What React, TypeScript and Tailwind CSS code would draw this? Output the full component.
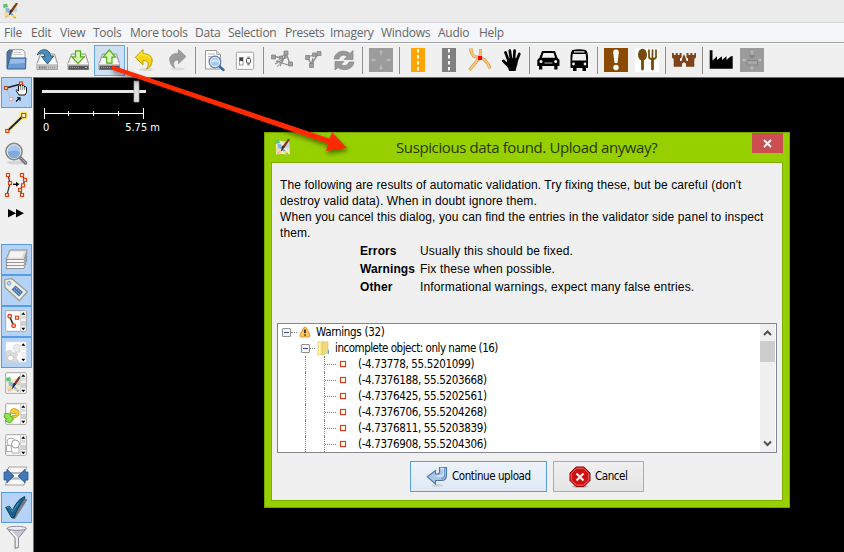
import React from "react";

type Kids = { children?: React.ReactNode };

const tahoma = "font-['DejaVu_Sans_Condensed','DejaVu_Sans',sans-serif]";

function Tool({ children, active }: Kids & { active?: boolean }) {
  return (
    <div className={`relative h-[31px] w-[31px] shrink-0 ${active ? "bg-[#cfe0f5] outline outline-1 -outline-offset-1 outline-[#66a7e8]" : ""}`}>
      <svg viewBox="0 0 31 31" className="block h-[31px] w-[31px]">{children}</svg>
    </div>
  );
}

function Side({ children, active }: Kids & { active?: boolean }) {
  return (
    <div className={`h-[31px] w-[31px] shrink-0 ${active ? "bg-[#b5d3f6] outline outline-1 -outline-offset-1 outline-[#569de5]" : ""}`}>
      <svg viewBox="0 0 31 31" className="block h-[31px] w-[31px]">{children}</svg>
    </div>
  );
}

function Sep() {
  return <div className="ml-[2px] mr-[3px] mt-[2px] h-[27px] w-px shrink-0 bg-[#8e8e8e]" />;
}

function Disk() {
  return (
    <g>
      <path d="M8.5 9h14l3 9.5v6H5v-6z" fill="#e9e9e8" stroke="#8d8d8b" strokeWidth=".9" />
      <path d="M9.5 10.5h12l2 7H7.5z" fill="#fbfbfb" />
      <path d="M5.3 19h20v5.3h-20z" fill="#bfc0be" />
      <path d="M5.3 18.7h20" stroke="#fff" />
      <path d="M7 22.5h8" stroke="#777" strokeWidth="2" strokeDasharray="1 .6" />
      <path d="M16 22.5h8" stroke="#999" strokeWidth="1.5" strokeDasharray="1 1" />
    </g>
  );
}

function DarkDisk() {
  return (
    <g>
      <Disk />
      <path d="M5.5 20.7h20v4h-20z" fill="#55585a" />
      <path d="M7 22.5h9" stroke="#9a9a9a" strokeDasharray="1 1" />
      <path d="M22 22.5h2" stroke="#9ad36a" />
    </g>
  );
}

function Logo() {
  return (
    <g>
      <path d="M1 1.5h4l3 1 6-.5 1 13-4 .5-5-.7-5 .7z" fill="#f3ecc4" />
      <path d="M9 2.5l4.5 1 .5 5-3 1z" fill="#b9d3f4" />
      <path d="M0 1.5l4-1 1 3.500-4.500 1z" fill="#5cc46c" />
      <path d="M2.500 4.500l4 1 .5 4-4 2z" fill="#8ab6ea" />
      <path d="M1 10l4-1 2 5-5 1.500z" fill="#f6d99a" />
      <path d="M5.500 8l7 7" stroke="#78a8e6" strokeWidth="1.800" />
      <path d="M2 14.500l6-4" stroke="#dc8cc4" strokeWidth=".6" />
      <path d="M9 13h3" stroke="#f2d96a" strokeWidth="2" />
      <path d="M13.500.8L8.500 8" stroke="#8d3410" strokeWidth="2.200" strokeLinecap="round" />
      <path d="M9.500 7.500l-3 4.500 1-5z" fill="#38281e" stroke="#38281e" strokeWidth=".6" />
    </g>
  );
}

function Node({ x, y, s = 3, c = "#e2420f" }: { x: number; y: number; s?: number; c?: string }) {
  return <rect x={x - s / 2} y={y - s / 2} width={s} height={s} fill="#fff" stroke={c} strokeWidth="1.2" />;
}

function Panel({ children }: Kids) {
  return (
    <g>
      <rect x="4.7" y="4.700" width="20.600" height="20.600" rx="1" fill="#fff" stroke="#a6a6a6" />
      {children}
      <rect x="19.500" y="5.300" width="5.300" height="19.400" fill="#f7f7f7" />
      <path d="M19.500 5v20" stroke="#c9c9c9" strokeWidth=".7" />
      <rect x="20" y="15" width="5" height="5" fill="#d0d0d0" />
      <path d="M20.500 10.500h4M20.500 12.500h4M21.500 11.500h4" stroke="#bdbdbd" strokeDasharray="1 1" />
      <path d="M22.300 6.200l2 2.600h-4zM22.300 24.300l2-2.600h-4z" fill="#000" />
    </g>
  );
}

function FourArrows() {
  return (
    <g>
      <rect x="3" y="3" width="24" height="24" fill="#9b9b9b" />
      <path d="M3 12l8-9M9 27L27 10M18 27l9-7" stroke="#a1a1a1" />
      <path d="M15 6v4M15 20v4M6 15h4M20 15h4" stroke="#bdbdbd" />
      <path d="M13 7.500L15 5l2 2.500zM13 22.500l2 2.500 2-2.500zM7.500 13L5 15l2.500 2zM22.500 13l2.500 2-2.500 2z" fill="#bdbdbd" />
    </g>
  );
}

function Toolbar() {
  return (
    <div className="flex h-[34px] items-start bg-[#f0f0f0] pl-px pt-px">
      <Tool>
        <path d="M6 7l2-2h4l1 2v16H6z" fill="#52749c" stroke="#456387" />
        <path d="M10 11l2-6.500h9.500L24 7v7H10z" fill="#f5f5f5" stroke="#8d8d8d" strokeWidth=".8" />
        <path d="M13 7.500h7M12.500 9.500h9" stroke="#bcbcbc" strokeWidth=".8" />
        <path d="M8.500 13h16.500L24.500 24H6z" fill="#6d9cd2" stroke="#31609a" />
        <path d="M9.500 14h14.500l-.5 4-15 1z" fill="#9abce3" />
      </Tool>
      <Tool>
        <Disk />
        <path d="M5.500 10C6 4 17 1.500 18.700 11h3L15.500 19 9.500 11.500h3.300C12.500 7.500 9 7 5.500 10z" fill="#4e8db9" stroke="#295f85" />
      </Tool>
      <Tool>
        <DarkDisk />
        <path d="M12.500 5.800h5v6h3.700L15 18.300 8.800 11.800h3.700z" fill="#dcf8b4" stroke="#4caf19" strokeWidth="1.200" />
      </Tool>
      <Tool active>
        <DarkDisk />
        <path d="M12.700 18.200h5.300v-6h3.500L15.300 5 9 12.200h3.700z" fill="#dcf8b4" stroke="#4caf19" strokeWidth="1.200" />
      </Tool>
      <Sep />
      <Tool>
        <ellipse cx="15" cy="24.500" rx="7" ry="1.500" fill="#d7d7d7" />
        <path d="M4.300 12.300L12 4.600v4c7 0 10 4 9 8.500-.5 4-3 6-5.500 6.800 2-2.500 3.500-8.400-3.500-8.400v4.300z" fill="#f5d60f" stroke="#b99500" strokeWidth=".9" />
        <path d="M6 12.300L11 7.300v2.500c4 0 7 1 8 4" fill="none" stroke="#fdf08a" strokeWidth=".8" />
      </Tool>
      <Tool>
        <ellipse cx="16" cy="24" rx="7" ry="1.500" fill="#dcdcdc" />
        <path d="M24 11.500L16.500 4.500v3.700c-7 0-10 4-8.500 8.500.7 3 2.500 5.300 5 6.300-2-3-2.500-8 3.500-8v3.800z" fill="#9c9c9c" stroke="#8c8c8c" strokeWidth=".7" />
      </Tool>
      <Sep />
      <Tool>
        <path d="M6.500 5.500h11l4 4V24h-15z" fill="#fcfcfc" stroke="#9b9b9b" />
        <path d="M17.500 5.500v4h4" fill="#ddd" stroke="#9b9b9b" strokeWidth=".7" />
        <path d="M9 9h7M9 11.500h9M9 14h3M9 16.500h1" stroke="#b8b8b8" />
        <path d="M20 21l4.500 4" stroke="#3c67a4" strokeWidth="2.500" strokeLinecap="round" />
        <circle cx="16" cy="17" r="5.800" fill="#a6c8ee" stroke="#6182ae" strokeWidth="1.200" />
        <circle cx="16" cy="17" r="4.600" fill="none" stroke="#e1eefb" />
        <path d="M12.500 17q3.500-3 7 0" fill="none" stroke="#d8e9fc" strokeWidth="2" />
      </Tool>
      <Tool>
        <rect x="6.300" y="7.200" width="17.400" height="17.200" rx="1" fill="#fafafa" stroke="#a5a5a5" />
        <rect x="9.500" y="12.500" width="3.500" height="7.500" fill="#fff" stroke="#999" />
        <path d="M9.500 12.500h3.500v3.500h-3.500z" fill="#444" />
        <path d="M18.500 11.500v9" stroke="#999" strokeWidth="2.500" />
        <rect x="16.500" y="13.500" width="4" height="4.500" rx="1" fill="#fff" stroke="#555" />
      </Tool>
      <Sep />
      <Tool>
        <g fill="none" stroke="#8c8c8c" strokeWidth="1.300">
          <path d="M6 11l8 2 5-5 4 11M8 19l12-7M13 21l6-12M9 16l12 4" />
          <path d="M14 13l-5 4M20 10l-10 12" strokeWidth=".8" />
        </g>
        <path d="M4.500 10h4v4h-4zM17 6h4v4h-4zM12.500 11h3v3h-3zM21.500 17h4v4h-4z" fill="#a0a0a0" stroke="#7e7e7e" strokeWidth=".7" />
      </Tool>
      <Tool>
        <path d="M9 12l7-2 5-2-5 7-2 5-5-8M15 13l-2 8" fill="none" stroke="#8c8c8c" strokeWidth="1.300" />
        <path d="M7.500 10.500h4v4h-4zM19 6.500h4v4h-4zM14.500 8h3.500v3.500h-3.500zM11.500 18.500h4v4h-4z" fill="#a0a0a0" stroke="#7e7e7e" strokeWidth=".7" />
      </Tool>
      <Tool>
        <path d="M5 14C6 6 16 4 21 8.500l3-3v9h-9l3-3c-3-2.500-7-1.500-8 2.500zM25 17c-1 8-11 9.500-16 5.500l-3 2.500v-8.500h9l-3 3c3 2 7 1 8-2.500z" fill="#999" stroke="#858585" strokeWidth=".7" />
      </Tool>
      <Sep />
      <Tool><FourArrows /></Tool>
      <Sep />
      <Tool>
        <rect x="8" y="3" width="14" height="24" fill="#ffa500" />
        <path d="M15 4v23" stroke="#fff" strokeWidth="2" strokeDasharray="3.400 2.600" />
      </Tool>
      <Tool>
        <rect x="8" y="3" width="14" height="24" fill="#808080" />
        <path d="M15 4v23" stroke="#fff" strokeWidth="2" strokeDasharray="3.400 2.600" />
      </Tool>
      <Tool>
        <path d="M4 5h2.500q0 5 3 6.500l5.500 1M15.500 4v4l-.5 4.500q7 2 10 11M15 12.500L4.500 25" fill="none" stroke="#d9a04f" strokeWidth="3" />
        <path d="M4.500 5h2q0 5 3 6.500l5.500 1M15.500 4.500v4l-.5 4q7 2 9.500 10.500M15 12.500L5 24.500" fill="none" stroke="#fbc577" strokeWidth="1.800" />
        <rect x="13" y="11" width="4" height="4" fill="red" />
      </Tool>
      <Tool>
        <g stroke="#000" fill="none" strokeLinecap="round">
          <path d="M12.300 15L9.500 7.500M15 14L13.800 5.500M18 14l.6-8.300M20.500 16l2.800-7" strokeWidth="2.700" />
          <path d="M13 21.500L7.500 16" strokeWidth="3" />
        </g>
        <path d="M11 13.500l10.700-.5q.6 5-1.200 9l-1 4h-6.500l-1-3.500-3-4 2-1z" fill="#000" />
      </Tool>
      <Sep />
      <Tool>
        <path d="M9 6h13l2.300 6.500L26.500 15v6H24.500v3.500h-3.200V21h-12v3.500H6V21H4.300v-6l2.200-2.500z" fill="#000" />
        <path d="M10.500 8h10l1.700 4.800H8.800z" fill="#f0f0f0" />
        <circle cx="8" cy="16.500" r="1.500" fill="#f0f0f0" /><circle cx="22.700" cy="16.500" r="1.500" fill="#f0f0f0" />
        <path d="M11.500 18h8" stroke="#f0f0f0" strokeWidth=".8" />
      </Tool>
      <Tool>
        <path d="M8.500 5q6.500-1.600 13 0 2 1 2.500 6v12h-2v3h-3.500v-3h-6v3H9v-3H6.500V11Q7 6 8.500 5z" fill="#000" />
        <path d="M10 6.300h10.500v1.200H10zM8.700 9h13l.6 6.500H8.200z" fill="#f0f0f0" />
        <circle cx="9.500" cy="19" r="1.400" fill="#f0f0f0" /><circle cx="21" cy="19" r="1.400" fill="#f0f0f0" />
      </Tool>
      <Sep />
      <Tool>
        <rect x="3" y="3" width="24" height="24" fill="#8b4a00" />
        <path d="M15 4.500q3.500 0 2.700 4L16.500 18h-3l-1.200-9.500q-.8-4 2.700-4z" fill="#fff" />
        <circle cx="15" cy="22.500" r="2.700" fill="#fff" />
      </Tool>
      <Tool>
        <rect x="3" y="3" width="24" height="24" fill="#fff" />
        <ellipse cx="10.500" cy="9.700" rx="4.500" ry="6" fill="#734a08" />
        <path d="M10.500 14v10" stroke="#734a08" strokeWidth="2.800" strokeLinecap="round" />
        <path d="M17 5v7q0 2 3.500 2t3.500-2V5M20.500 5v8" fill="none" stroke="#734a08" strokeWidth="1.700" strokeLinecap="round" />
        <path d="M20.500 14v10" stroke="#734a08" strokeWidth="2.800" strokeLinecap="round" />
      </Tool>
      <Sep />
      <Tool>
        <path d="M3 8h1.800v2h1.900V8h2v2h1.900V8h2v4.500L11 13.500v2.500h1.500l1.500-5 1-1.500 1 1.500 1.500 5H19v-2.500l-1.500-1V8h2v2h1.900V8h2v2h1.900V8H27v4.500l-1.700 1.500v7.700h-8.300v-3q-2-3-4 0v3H4.700V14L3 12.500z" fill="#7d431a" />
      </Tool>
      <Sep />
      <Tool>
        <path d="M3.700 5.300h2.800v10.200l4.500-4.300V15l5-3.800V15l4.500-3.800V15l4-3.500 2.200-.5v12.700h-23z" fill="#000" />
      </Tool>
      <Tool>
        <FourArrows />
        <path d="M10 15.500h10.500v4.500H10z" fill="#a8a8a8" stroke="#858585" />
        <path d="M11.500 10h7l-3.500 4z" fill="#858585" />
      </Tool>
    </div>
  );
}

function Sidebar() {
  return (
    <div className="flex w-[33px] shrink-0 flex-col bg-[#f0f0f0] pl-px">
      <Side active>
        <path d="M5 11l15-4" stroke="#222" strokeWidth="1.600" />
        <path d="M6 13l4 9" stroke="#c3b9c3" strokeWidth="1.200" />
        <Node x={5} y={11} /><Node x={20} y={6.500} /><Node x={10} y={22} c="#deb0b0" />
        <path d="M17.500 14V9q1-2 2 0V8q1.200-1.500 2 0v1q1.300-1.300 2 0v1q1.500-1 2 .5v5l-1.500 2.500h-6l-3-4.500q.5-1.700 2.500.5z" fill="#fff" stroke="#000" strokeWidth=".9" />
        <path d="M19.700 9v4M21.800 9v4M23.700 10v3" stroke="#000" strokeWidth=".5" />
        <path d="M15 24.500l3.500-3.300M16 20.700h3v3" fill="none" stroke="#000" strokeWidth="1.100" />
      </Side>
      <Side>
        <path d="M6.500 23L22.500 7.500" stroke="#f6f08a" strokeWidth="5" />
        <rect x="18.700" y="3.700" width="7.600" height="7.600" fill="#f8ef6d" />
        <path d="M6.500 23L22.500 7.500" stroke="#16165c" strokeWidth="1.800" />
        <Node x={6.300} y={23} /><Node x={22.700} y={7.500} s={4} />
      </Side>
      <Side>
        <ellipse cx="15" cy="23.500" rx="9" ry="2" fill="#d6d6d6" />
        <path d="M19 18.500l5.500 5.500" stroke="#777" strokeWidth="3.500" strokeLinecap="round" />
        <path d="M20 19l4.500 4.500" stroke="#ccc" strokeDasharray="1.500 1" />
        <circle cx="13" cy="12.500" r="8" fill="#a8c7ea" stroke="#888" strokeWidth="1.800" />
        <circle cx="13" cy="12.500" r="6.800" fill="none" stroke="#e6eff9" />
        <path d="M6.800 13q6-3 12.400 0a6.200 6.200 0 0 1-12.400 0z" fill="#7eaadc" />
      </Side>
      <Side>
        <path d="M7 5l2 8-3 12M21 5l3 5-2 5-3 5 2 5" fill="none" stroke="#333" strokeWidth="1.200" />
        <path d="M12 14.300h3.500" stroke="#000" strokeWidth="1.300" /><path d="M15 11.800l3.300 2.500-3.300 2.500z" />
        <Node x={7} y={5} /><Node x={9} y={13} /><Node x={6} y={25} />
        <Node x={21} y={5} /><Node x={24} y={10} /><Node x={22} y={15.300} /><Node x={19} y={20} /><Node x={21} y={25} />
      </Side>
      <svg viewBox="0 0 31 24" className="block h-[24px] w-[31px] shrink-0">
        <path d="M7 8l8 4.200-8 4.300zM15 8l8 4.200-8 4.300z" fill="#000" />
      </svg>
      <div className="h-[19px] shrink-0" />
      <Side active>
        {[9, 6, 3].map((d) => (
          <path key={d} d={`M8.500 ${6 + d}h17.500l-3 9.500H5z`} fill="#f6f6f6" stroke="#8b8b8b" strokeWidth=".9" />
        ))}
        <path d="M9 6h17.300l-3.300 9.500H5z" fill="#dfdfdf" stroke="#8b8b8b" strokeWidth=".9" />
        <path d="M10 7.500h13l-2.500 6H7.500z" fill="#f4f4f4" />
      </Side>
      <Side active>
        <path d="M3.700 4.500L11 3.700l15.300 13-8 9L4 12.500z" fill="#eeeeea" stroke="#999989" strokeWidth="1.200" />
        <circle cx="8" cy="8.300" r="1.900" fill="#b5d3f6" stroke="#8aa1bd" />
        <path d="M14.500 10.500l7.500 6.500-4 4.500-7.500-7z" fill="#4878b4" />
        <path d="M14.500 12.500l5.500 5M13 14.500l5.500 5" stroke="#a9c3e4" strokeWidth=".9" strokeDasharray="2 .8" />
      </Side>
      <Side active>
        <Panel>
          <path d="M8.700 10.500L12.700 20" stroke="#222" strokeWidth="1.500" />
          <circle cx="8.700" cy="10.300" r="1.800" fill="#fff" stroke="#e83c1c" strokeWidth="1.300" />
          <circle cx="12.700" cy="19.700" r="1.800" fill="#fff" stroke="#e83c1c" strokeWidth="1.300" />
          <Node x={16} y={11.700} />
        </Panel>
      </Side>
      <Side active>
        <rect x="4.700" y="4.700" width="20.600" height="20.600" rx="1" fill="#fff" stroke="#cbd6e2" strokeWidth=".8" />
        <path d="M13 8.500l3-1.500 3 1.500v6.500h-4l-3-3z" fill="#ececec" stroke="#d2d2d2" strokeWidth=".8" />
        <path d="M5 15l2-1.500h3l1 1.500 2.500 1 2-.5 1 2.500-1.300 2 .3 2.500 2 1v1.500H5z" fill="#dadada" stroke="#c4c4c4" strokeWidth=".6" />
        <circle cx="9.500" cy="21" r="2.800" fill="#fff" stroke="#bbb" strokeWidth=".7" />
        <rect x="20.500" y="15" width="4.500" height="5" fill="#efefef" />
        <path d="M20.500 10.500h4M20.500 12.500h4" stroke="#dedede" strokeDasharray="1 1" />
        <path d="M22.300 6.200l2 2.600h-4zM22.300 24.300l2-2.600h-4z" fill="#000" />
      </Side>
      <Side>
        <Panel>
          <g transform="translate(5 8.500)"><Logo /></g>
        </Panel>
      </Side>
      <Side>
        <Panel>
          <path d="M9 14q1-6 6-4l3 2v4l-4 3-5 .5 2-3h4v-2h-3z" fill="#f3cf3c" stroke="#c79c10" strokeWidth=".8" />
        </Panel>
        <path d="M4 14l6 1-1 2 3 1v3l-3 3-5-2 2-2-3-2z" fill="#8fe052" stroke="#4aa31c" strokeWidth=".8" />
      </Side>
      <Side>
        <Panel>
          <circle cx="10" cy="12" r="4" fill="#fff" stroke="#aaa" />
          <path d="M5.500 15.500h6v6h-6z" fill="#fff" stroke="#aaa" />
          <path d="M10 16q4-2 8 1v6h-7z" fill="#fff" stroke="#aaa" />
          <circle cx="14.500" cy="14" r="4" fill="#fff" stroke="#999" />
        </Panel>
      </Side>
      <Side>
        <path d="M8 6h18l-3 6H5zM8 12h18l-3 6H5zM8 17h18l-3 7H4z" fill="#f9f9f9" stroke="#999" strokeWidth=".9" />
        <path d="M3 11h3V8.200l7 6.800-7 6.800V19H3z" fill="#4377b8" stroke="#2a5896" strokeWidth=".8" />
        <path d="M27 11h-3V8.200L17 15l7 6.800V19h3z" fill="#4377b8" stroke="#2a5896" strokeWidth=".8" />
      </Side>
      <Side active>
        <path d="M6.500 16.500l3-1 3 5 11-14 3 1L14 27h-2.500z" fill="#6e7a85" />
        <path d="M4.700 15.500l3.600-1.500 3 4.500Q16 8 23.500 4.500l.5 1.500Q18 12 13 25.500h-2.500z" fill="#17648f" stroke="#0c3349" strokeWidth=".9" />
        <path d="M6 15.700l2-1 3.500 5L17.500 11" fill="none" stroke="#4fa6cf" strokeWidth=".8" />
      </Side>
      <Side>
        <path d="M6 5.500q9.700 3 19.400 0L17.500 15v9.500l-3.500 1V15z" fill="#c8c8d2" stroke="#80808e" strokeWidth=".9" />
        <path d="M10 8l6 7v9" fill="none" stroke="#fff" strokeWidth="1.300" />
        <ellipse cx="15.700" cy="5.300" rx="9.700" ry="2" fill="#ececf1" stroke="#85859a" strokeWidth=".9" />
      </Side>
    </div>
  );
}

const coords = [
  "(-4.73778, 55.5201099)",
  "(-4.7376188, 55.5203668)",
  "(-4.7376425, 55.5202561)",
  "(-4.7376706, 55.5204268)",
  "(-4.7376811, 55.5203839)",
  "(-4.7376908, 55.5204306)",
];

function Minus() {
  return (
    <span className="relative block h-[9px] w-[9px] rounded-[1px] border border-[#919191] bg-[#f6f6f6]">
      <span className="absolute left-px top-[3px] h-px w-[5px] bg-[#3a4f9f]" />
    </span>
  );
}

function Tree() {
  return (
    <div className="ml-[5px] mt-[18px] flex h-[130px] w-[500px] overflow-hidden border border-[#828790] bg-white pr-px">
      <div className={`w-[482px] text-[11.500px] leading-[16px] text-black ${tahoma}`}>
        <div className="flex h-[16px] items-center pl-[4px]">
          <Minus />
          <span className="w-[6px] border-t border-dotted border-[#808080]" />
          <svg viewBox="0 0 12 12" className="ml-[2px] h-[12px] w-[12px]">
            <path d="M6 1q1 0 1.500 1l3.500 7q.3 2-1.500 2h-7Q.7 11 1 9l3.500-7Q5 1 6 1z" fill="#ffc65b" stroke="#d6902a" strokeWidth=".9" />
            <path d="M6 3.500v3.800M6 8.500v1.300" stroke="#222" strokeWidth="1.600" />
          </svg>
          <span className="ml-[5px] whitespace-nowrap tracking-[-0.3px]">Warnings (32)</span>
        </div>
        <div className="flex h-[16px] items-center pl-[23px]">
          <Minus />
          <span className="w-[5px] border-t border-dotted border-[#808080]" />
          <svg viewBox="0 0 14 16" className="ml-px h-[16px] w-[14px]">
            <path d="M2 2l6-1v13l-6 1z" fill="#f9eb9b" stroke="#e0c860" strokeWidth=".6" />
            <path d="M6 3l6-1.500V13l-6 2z" fill="#f1da7c" stroke="#d6bb54" strokeWidth=".6" />
            <path d="M12.500 10v4" stroke="#5aa7e8" />
            <path d="M3.500 3v11" stroke="#fffbe0" />
          </svg>
          <span className="ml-[5px] whitespace-nowrap tracking-[-0.480px]">incomplete object: only name (16)</span>
        </div>
        {coords.map((c) => (
          <div key={c} className="ml-[27px] flex h-[16px] items-center border-l border-dotted border-[#808080]">
            <span className="ml-[18px] h-[16px] border-l border-dotted border-[#808080]" />
            <span className="w-[11px] border-t border-dotted border-[#808080]" />
            <span className="ml-[4px] h-[6px] w-[6px] border border-[#dd3a12] bg-[#fff4ee] shadow-[0_0_1px_#e89070]" />
            <span className="ml-[12px] whitespace-nowrap tracking-[-0.340px]">{c}</span>
          </div>
        ))}
      </div>
      <div className="flex w-[15px] flex-col items-center bg-[#f0f0f0]">
        <svg viewBox="0 0 15 17" className="h-[17px] w-[15px]"><path d="M4 11l3.500-3.500L11 11" fill="none" stroke="#505050" strokeWidth="2" /></svg>
        <div className="h-[21px] w-full bg-[#cdcdcd]" />
        <div className="flex-1" />
        <svg viewBox="0 0 15 17" className="h-[17px] w-[15px]"><path d="M4 6.500L7.500 10 11 6.500" fill="none" stroke="#505050" strokeWidth="2" /></svg>
      </div>
    </div>
  );
}

function Dialog() {
  return (
    <div className="absolute left-[264px] top-[132px] flex h-[376px] w-[526px] flex-col border border-[#76a500] bg-[#96d000]">
      <div className="relative flex h-[29px] items-start">
        <svg viewBox="0 0 16 16" className="ml-[10px] mt-[6px] h-[16px] w-[16px]"><Logo /></svg>
        <div className="ml-[105px] mt-[4px] whitespace-nowrap font-['Open_Sans','Noto_Sans',sans-serif] text-[15px] leading-[20px] tracking-[-0.390px] text-[#28380a]">
          Suspicious data found. Upload anyway?
        </div>
        <div className="absolute left-[487px] top-0 flex h-[20px] w-[31px] items-center justify-center bg-[#cb4f50]">
          <svg viewBox="0 0 9 9" className="h-[9px] w-[9px]"><path d="M1 1l7 7M8 1L1 8" stroke="#fff" strokeWidth="1.800" /></svg>
        </div>
      </div>
      <div className="ml-[6px] h-[339px] w-[512px] border border-[#7dae00] bg-[#f0f0f0] font-['Liberation_Sans',Arial,sans-serif] text-[12px] text-black">
        <div className="whitespace-nowrap pl-[8px] pt-[14px] leading-[16px] tracking-[0.1px]">
          <div>The following are results of automatic validation. Try fixing these, but be careful (don't</div>
          <div>destroy valid data). When in doubt ignore them.</div>
          <div>When you cancel this dialog, you can find the entries in the validator side panel to inspect</div>
          <div>them.</div>
        </div>
        <div className="grid grid-cols-[60px_auto] whitespace-nowrap pl-[88px] pt-px leading-[18px] tracking-[0.150px]">
          <b className="tracking-[0.1px]">Errors</b><span>Usually this should be fixed.</span>
          <b className="tracking-[0.1px]">Warnings</b><span>Fix these when possible.</span>
          <b className="tracking-[0.1px]">Other</b><span>Informational warnings, expect many false entries.</span>
        </div>
        <div className="h-[9px]" />
        <Tree />
        <div className={`mt-[8px] flex gap-[6px] pl-[138px] text-[11.500px] tracking-[-0.430px] ${tahoma}`}>
          <div className="flex h-[31px] w-[137px] items-center border border-[#569de5] bg-linear-to-b from-[#eef3fa] to-[#dfe9f5] pl-[15px]">
            <svg viewBox="0 0 22 22" className="h-[22px] w-[22px]">
              <ellipse cx="11.500" cy="19.500" rx="6" ry="1.500" fill="#cdd2d9" />
              <path d="M1.300 10.800L9.500 4.500V8H11.500q2 0 2-2V1.500h7V9q0 5.500-5 5.500h-6V18z" fill="#a9c5e8" stroke="#4a76ad" strokeWidth="1.100" />
              <path d="M14.500 2.500h3v5q0 2.500-3 2.500h-4" fill="none" stroke="#dfeaf8" strokeWidth="1.300" />
              <path d="M18.500 2v7q0 3.500-3.500 4" fill="none" stroke="#6f98cc" strokeWidth="1.200" />
            </svg>
            <span className="ml-[4px] whitespace-nowrap">Continue upload</span>
          </div>
          <div className="flex h-[31px] w-[91px] items-center border border-[#acacac] bg-linear-to-b from-[#f0f0f0] to-[#e5e5e5] pl-[15px]">
            <svg viewBox="0 0 22 22" className="h-[22px] w-[22px]">
              <ellipse cx="11" cy="20.500" rx="8" ry="1.300" fill="#b5b5b5" />
              <path d="M7 1h8l6 6v7.500l-6 6H7l-6-6V7z" fill="#cf1010" stroke="#8d0808" />
              <path d="M7.500 2.300h7l5.200 5.200V14l-5.200 5.200h-7L2.300 14V7.500z" fill="none" stroke="#f07272" strokeWidth=".9" />
              <path d="M7.500 7.500l7 7M14.500 7.500l-7 7" stroke="#f4f4f4" strokeWidth="2.100" />
            </svg>
            <span className="ml-[4px] whitespace-nowrap">Cancel</span>
          </div>
        </div>
      </div>
    </div>
  );
}

function MapView() {
  return (
    <div className="flex-1 border-l border-t border-[#6e6e6e] bg-black">
      <svg viewBox="34 78 130 45" className="block h-[45px] w-[130px]">
        <path d="M42 90h104v3H42z" fill="#e6e6e6" />
        <path d="M134 81h5v21h-5z" fill="#dedede" stroke="#a5a5a5" strokeWidth=".7" />
        <path d="M44.500 108v11M143.500 108v11M44 113.500h100M68.500 111v5M93.500 111v5M118.500 111v5" stroke="#fff" fill="none" />
      </svg>
      <div className={`-mt-[2px] flex w-[126px] justify-between pl-[9px] text-[11px] leading-[14px] text-white ${tahoma}`}>
        <span>0</span><span>5.75 m</span>
      </div>
    </div>
  );
}

export default function App() {
  return (
    <div className="relative flex h-[552px] w-[844px] flex-col overflow-hidden bg-[#f0f0f0]">
      <div className="h-[23px] shrink-0 border-b border-[#d9d9d9] bg-[#ebebeb] pl-[3px] pt-[3px]">
        <svg viewBox="0 0 16 16" className="block h-[16px] w-[16px]"><Logo /></svg>
      </div>
      <div className="flex h-[20px] shrink-0 border-b border-[#a0a0a0] bg-[#f5f6f9] pl-[4px] font-['Open_Sans','Noto_Sans',sans-serif] text-[12px] leading-[20px] tracking-[-0.250px] text-[#666] whitespace-nowrap">
        <span className="w-[27px]">File</span>
        <span className="w-[29px]">Edit</span>
        <span className="w-[33px]">View</span>
        <span className="w-[37px]">Tools</span>
        <span className="w-[65px]">More tools</span>
        <span className="w-[33px]">Data</span>
        <span className="w-[57px]">Selection</span>
        <span className="w-[45px]">Presets</span>
        <span className="w-[51px]">Imagery</span>
        <span className="w-[57px]">Windows</span>
        <span className="w-[41px]">Audio</span>
        <span>Help</span>
      </div>
      <div className="h-px shrink-0 bg-white" />
      <div className="h-[33px] shrink-0"><Toolbar /></div>
      <div className="flex min-h-0 flex-1">
        <Sidebar />
        <MapView />
      </div>
      <Dialog />
      <svg viewBox="100 55 260 110" className="absolute left-[100px] top-[55px] h-[110px] w-[260px] drop-shadow-[1px_3px_2px_rgba(0,0,0,0.45)]">
        <path d="M112.500 65.500L329.500 138.500l2.700-6.200L347 148l-21 3 2-7.300L111 69.500z" fill="#ff2a00" />
      </svg>
    </div>
  );
}
